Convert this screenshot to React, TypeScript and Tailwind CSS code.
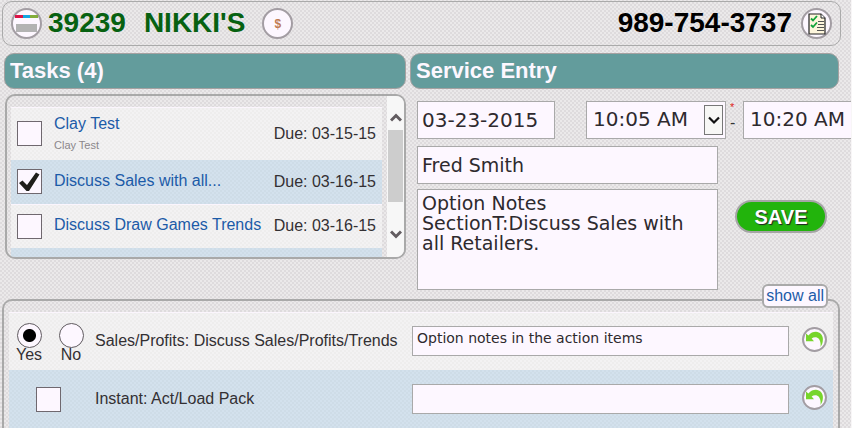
import React, { useState } from "react";

type Task = { id: number; title: string; note?: string; due: string; done: boolean };

const initialTasks: Task[] = [
  { id: 1, title: "Clay Test", note: "Clay Test", due: "03-15-15", done: false },
  { id: 2, title: "Discuss Sales with all...", due: "03-16-15", done: true },
  { id: 3, title: "Discuss Draw Games Trends", due: "03-16-15", done: false },
];

const sans = "font-['Liberation_Sans',Arial,sans-serif]";
const field =
  "block border border-[#a9a9a9] bg-[#fdf7ff] px-1 text-[#2e2a2e] font-['DejaVu_Sans',sans-serif] focus:outline-none";
const roundButton =
  "flex shrink-0 cursor-pointer items-center justify-center rounded-full border-2 border-[#a39da3] bg-[#fdf7ff]";
const tick =
  "h-[25px] w-[25px] cursor-pointer appearance-none border border-[#6f686f] bg-[#fdf7ff]";
const lightRow = "bg-[#f9f9f9]/60 border-t border-[#fbf5fd]";
const blueRow = "bg-[#c3dcee]/60";

const SectionTitle = ({ children }: { children: React.ReactNode }) => (
  <h2 className="rounded-[10px] border border-[#a5a1a1] bg-[#639c9c] px-[5px] text-[22px] leading-[34px] font-bold text-[#fdf7ff]">
    {children}
  </h2>
);

const CardIcon = () => (
  <svg className="shrink-0" width="23" height="18" viewBox="0 0 23 18" aria-hidden="true">
    <rect x="0" y="0" width="8" height="3" fill="#dc1447" />
    <rect x="8" y="0" width="7" height="3" fill="#15a4e0" />
    <rect x="15" y="0" width="8" height="3" fill="#84ad3c" />
    <rect x="1" y="9" width="21" height="8" fill="#b3b3b3" />
  </svg>
);

const ChecklistIcon = () => (
  <svg className="shrink-0" width="18" height="22" viewBox="0 0 18 22" aria-hidden="true">
    <path d="M1 1H13L17 5V21H1Z" fill="#fdf5dc" stroke="#222" strokeWidth="1.2" />
    <path d="M13 1V5H17" fill="#fff" stroke="#222" strokeWidth="1" />
    <path d="M3 5.5L5 7.5L9 3M3 12L5 14L9 9.5" fill="none" stroke="#12a33a" strokeWidth="1.8" />
    <path d="M10 8.5H16M10 11.5H16M9 14.5H16M9 17.5H16" stroke="#555" strokeWidth="1.2" />
  </svg>
);

const UndoIcon = () => (
  <svg className="shrink-0" width="17" height="17" viewBox="0 0 17 17" aria-hidden="true">
    <path
      d="M0 2.5L2.400 4.400C4.800 1.500 7.500 .6 10 .7C14 .9 16.800 3.800 16.900 8C16.900 11 16.300 13.500 14.500 16C14.900 13.500 14.700 10.500 13 8C11.300 5.800 8 5.600 5.600 7.400L8 10.200H0Z"
      fill="#77d52b"
    />
  </svg>
);

const TickBox = ({ label, checked, onChange }: { label: string; checked?: boolean; onChange?: () => void }) => (
  <span className="relative block h-[25px] w-[25px]">
    <input type="checkbox" aria-label={label} checked={checked} onChange={onChange} className={tick} />
    {checked && (
      <svg className="pointer-events-none absolute inset-0" width="25" height="25" viewBox="0 0 25 25" aria-hidden="true">
        <path d="M2 14L5.500 11.500L10 16L19 3.500L22.500 5.500L12 22H9.500Z" fill="#1f1f1a" />
      </svg>
    )}
  </span>
);

const TimeSelect = ({ label, value, arrow }: { label: string; value: string; arrow?: boolean }) => (
  <div className="relative w-[140px] shrink-0">
    <select aria-label={label} defaultValue={value} className={`${field} h-[38px] w-full appearance-none px-[6px] pb-[2px] text-[20px]`}>
      <option>{value}</option>
    </select>
    {arrow && (
      <span className="pointer-events-none absolute top-1 right-[3px] flex h-[30px] w-[19px] items-center justify-center border border-[#777] bg-[#f7f7f5]">
        <svg width="12" height="9" viewBox="0 0 12 9" aria-hidden="true">
          <path d="M1 1.500L6 6.500L11 1.500" fill="none" stroke="#111" strokeWidth="2.200" />
        </svg>
      </span>
    )}
  </div>
);

const TaskList = () => {
  const [tasks, setTasks] = useState(initialTasks);
  const toggle = (id: number) =>
    setTasks(tasks.map((t) => (t.id === id ? { ...t, done: !t.done } : t)));

  return (
    <div className="mt-[5px] ml-px flex h-[165px] overflow-hidden rounded-[10px] border-2 border-[#a9a9a9]">
      <ul className="min-w-0 grow pt-[11px] pr-[5px] pl-1">
        {tasks.map((task) => (
          <li
            key={task.id}
            className={`flex items-center px-[6px] pb-px ${task.note ? "h-[53px]" : "h-[44px]"} ${task.id % 2 ? lightRow : blueRow}`}
          >
            <TickBox label={task.title} checked={task.done} onChange={() => toggle(task.id)} />
            <div className="ml-3 min-w-0 grow pb-[2px]">
              <a href="#task" className="block truncate text-base leading-5 text-[#1c5ba8]">{task.title}</a>
              {task.note && <p className="pt-[5px] text-[11px] leading-3 text-[#8b878b]">{task.note}</p>}
            </div>
            <span className="shrink-0 text-base text-[#333033]">Due: {task.due}</span>
          </li>
        ))}
        <li className={`h-[44px] ${blueRow}`} />
      </ul>
      <div className="flex w-[17px] shrink-0 flex-col items-center bg-[#f7f7f7]">
        <svg className="mt-[17px] shrink-0" width="12" height="9" viewBox="0 0 12 9" aria-hidden="true">
          <path d="M1 7.500L6 2.500L11 7.500" fill="none" stroke="#625c60" strokeWidth="3" />
        </svg>
        <span className="mt-2 h-[72px] w-[15px] shrink-0 bg-[#cdcdcd]" />
        <svg className="mt-7 shrink-0" width="12" height="9" viewBox="0 0 12 9" aria-hidden="true">
          <path d="M1 1.500L6 6.500L11 1.500" fill="none" stroke="#625c60" strokeWidth="3" />
        </svg>
      </div>
    </div>
  );
};

const ServiceEntry = () => (
  <div className="pt-3 pl-[7px]">
    <div className="flex">
      <input aria-label="Date" defaultValue="03-23-2015" className={`${field} h-[38px] w-[138px] shrink-0 text-[20px]`} />
      <div className="w-[31px] shrink-0" />
      <TimeSelect label="Start time" value="10:05 AM" arrow />
      <div className="flex w-[17px] shrink-0 flex-col px-1 text-[#333]">
        <span className="text-[11px] leading-3 text-[#e02318]">*</span>
        <span className="text-base leading-5">-</span>
      </div>
      <TimeSelect label="End time" value="10:20 AM" />
    </div>
    <div className="flex items-center">
      <div className="w-[301px] shrink-0">
        <input aria-label="Contact" defaultValue="Fred Smith" className={`${field} mt-[7px] h-[38px] w-full text-[19px]`} />
        <textarea
          aria-label="Notes"
          defaultValue={"Option Notes\nSectionT:Discuss Sales with all Retailers."}
          className={`${field} mt-[5px] h-[101px] w-full resize-none pt-[3px] pr-5 text-[19px] leading-5`}
        />
      </div>
      <button className="mt-1 ml-[17px] h-[33px] w-[92px] shrink-0 cursor-pointer rounded-full border-2 border-[#a5a5a5] bg-[#22b40c] text-xl leading-5 font-bold text-white [text-shadow:1px_1px_1px_#222]">
        SAVE
      </button>
    </div>
  </div>
);

const NoteField = ({ label, value }: { label: string; value?: string }) => (
  <>
    <input
      aria-label={`${label} notes`}
      defaultValue={value}
      className={`${field} h-[30px] w-[377px] shrink-0 pb-[6px] text-[14px]`}
    />
    <button aria-label={`Reset ${label}`} className={`${roundButton} mr-[6px] mb-[3px] ml-[13px] h-[25px] w-[25px]`}>
      <UndoIcon />
    </button>
  </>
);

const ActionItems = () => {
  const [answer, setAnswer] = useState("Yes");
  const [loaded, setLoaded] = useState(false);

  return (
    <section className="relative mt-[9px] mr-[11px] ml-[2px] rounded-t-[10px] border-2 border-b-0 border-[#a9a9a9] px-[5px] pt-[11px] text-base text-[#333033]">
      <a
        href="#all"
        className="absolute -top-[17px] right-[10px] rounded-md border-2 border-[#a9a9a9] bg-[#fdf7ff] px-[2px] leading-5 text-[#1c5ba8]"
      >
        show all
      </a>
      <div className={`flex h-[58px] items-center pb-[2px] ${lightRow}`}>
        <div className="flex w-[86px] shrink-0 pt-1 pl-[3px]">
          {["Yes", "No"].map((option) => (
            <label key={option} className="flex w-[34px] flex-col items-center leading-4 odd:mr-2">
              <input
                type="radio"
                name="sales"
                checked={answer === option}
                onChange={() => setAnswer(option)}
                className="h-[25px] w-[25px] appearance-none rounded-full border border-[#5f5a5f] bg-[#fdf7ff] checked:bg-[radial-gradient(circle,#000_6px,#fdf7ff_7px)]"
              />
              <span className="-mt-px">{option}</span>
            </label>
          ))}
        </div>
        <span className="min-w-0 grow truncate">Sales/Profits: Discuss Sales/Profits/Trends</span>
        <NoteField label="Sales/Profits" value="Option notes in the action items" />
      </div>
      <div className={`flex h-[58px] items-center ${blueRow}`}>
        <div className="w-[86px] shrink-0 pl-[27px]">
          <TickBox label="Instant: Act/Load Pack" checked={loaded} onChange={() => setLoaded(!loaded)} />
        </div>
        <span className="min-w-0 grow truncate">Instant: Act/Load Pack</span>
        <NoteField label="Instant" />
      </div>
    </section>
  );
};

const App = () => {
  return (
    <main
      className={`${sans} min-h-screen overflow-hidden border-r border-[#f8f6f7] bg-[#ebe9ea] bg-[repeating-conic-gradient(#dedbdd_0_25%,#ebe9ea_0_50%)] bg-[length:4px_4px] pt-px`}
    >
      <header className="mr-[10px] ml-[2px] flex h-[45px] items-center rounded-[10px] border border-[#aaa] px-2 text-[28px] font-bold">
        <button aria-label="Card" className={`${roundButton} h-[31px] w-[31px]`}>
          <CardIcon />
        </button>
        <h1 className="ml-[6px] flex gap-[18px] pb-[2px] text-[#076111]">
          <span>39239</span>
          <span>NIKKI'S</span>
        </h1>
        <button aria-label="Payments" className={`${roundButton} ml-[17px] h-[31px] w-[31px] text-xs text-[#c07b52]`}>
          $
        </button>
        <span className="ml-auto pb-[2px] text-black">989-754-3737</span>
        <button aria-label="Checklist" className={`${roundButton} ml-[9px] h-[31px] w-[31px]`}>
          <ChecklistIcon />
        </button>
      </header>
      <div className="mt-[7px] mr-3 ml-1 grid grid-cols-[402fr_429fr] gap-1">
        <section className="min-w-0">
          <SectionTitle>Tasks (4)</SectionTitle>
          <TaskList />
        </section>
        <section className="min-w-0">
          <SectionTitle>Service Entry</SectionTitle>
          <ServiceEntry />
        </section>
      </div>
      <ActionItems />
    </main>
  );
};

export default App;
